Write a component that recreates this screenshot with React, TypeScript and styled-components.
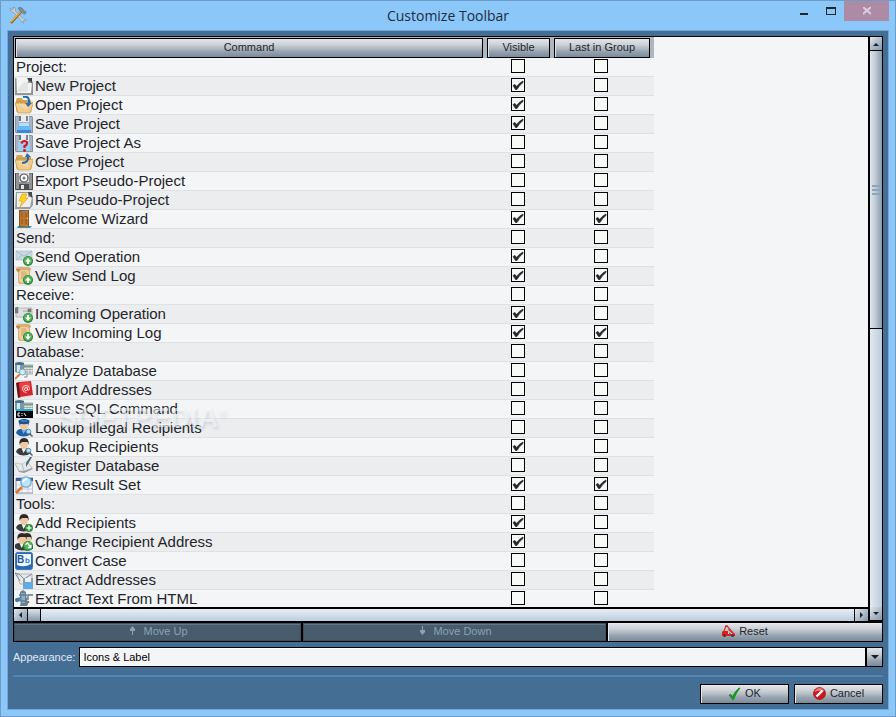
import React, { useState } from "react";
import styled, { createGlobalStyle, css } from "styled-components";

const GlobalStyle = createGlobalStyle`
  *, *::before, *::after { box-sizing: border-box; }
  html, body { margin: 0; height: 100%; }
  body { font-family: "Liberation Sans", Arial, sans-serif; font-size: 11px; color: #1f252b; }
  button, select, input { font: inherit; color: inherit; margin: 0; border-radius: 0; }
`;

const steel = css`
  background: linear-gradient(#e3e6ea 0%, #cfd4d9 28%, #b0b8c0 54%, #98a5b1 68%, #7a8b9b 100%);
`;

/* ---------- Window frame ---------- */

const Window = styled.main`
  display: flex;
  flex-direction: column;
  height: 100vh;
  padding: 0 6px 6px;
  background: #8cc7fa;
  border: 1px solid #6c9cc8;
`;

const TitleBar = styled.header`
  display: grid;
  grid-template-columns: 1fr auto 1fr;
  height: 29px;
  flex: none;
`;

const AppIcon = styled.span`
  padding: 5px 0 0 2px;
`;

const Title = styled.h1`
  margin: 0;
  font: 400 14px/29px "Open Sans", "Noto Sans", sans-serif;
  color: #1d2c3a;
`;

const WindowButtons = styled.div`
  display: flex;
  justify-content: flex-end;
  align-items: flex-start;
`;

const WindowButton = styled.button<{ $close?: boolean }>`
  display: grid;
  place-items: center;
  width: ${(p) => (p.$close ? 45 : 27)}px;
  height: 20px;
  padding: 0;
  border: 0;
  background: ${(p) => (p.$close ? "#ae8ba4" : "transparent")};
`;

const Client = styled.div`
  flex: 1;
  min-height: 0;
  display: flex;
  flex-direction: column;
  padding: 5px;
  background: #456e94;
  border: 1px solid #74a7d8;
`;

/* ---------- Scrolling list ---------- */

const Panel = styled.section`
  position: relative;
  flex: 1;
  min-height: 0;
  display: grid;
  grid-template: minmax(0, 1fr) 14px / minmax(0, 1fr) 14px;
  background: #000;
  border: 1px solid #000;
  border-bottom-width: 0;
`;

const ListView = styled.div`
  overflow: auto;
  scrollbar-width: none;
  background: #f3f5f7;
`;

const Table = styled.table`
  width: 640px;
  table-layout: fixed;
  border-collapse: collapse;
  font-size: 15px;
`;

const Col = styled.col<{ $w: number }>`
  width: ${(p) => p.$w}px;
`;

const HeadCell = styled.th`
  height: 21px;
  padding: 1px 3px 0 1px;
  font-weight: 400;
  background: #aeb6be;
  &:last-child { padding-right: 4px; }
`;

const HeadButton = styled.button`
  display: block;
  width: 100%;
  height: 20px;
  padding: 0 0 2px;
  font-size: 11px;
  border: 1px solid #000;
  box-shadow: inset 1px 1px #dfe4e9;
  ${steel}
`;

const Row = styled.tr`
  height: 19px;
  background: #f3f5f7;
  box-shadow: inset 0 -1px #dfe2e5;
  &:nth-child(even) { background: #ebedef; }
`;

const Cell = styled.td`
  height: 19px;
  padding: 0 0 0 1px;
`;

const CommandName = styled.div<{ $group?: boolean }>`
  display: flex;
  align-items: flex-start;
  gap: 2px;
  height: 19px;
  padding-left: ${(p) => (p.$group ? 1 : 0)}px;
  line-height: 17px;
  white-space: nowrap;
`;

const CheckCell = styled.td`
  height: 19px;
  padding: 1px 4px 0 1px;
  &:last-child { padding-right: 6px; }
`;

const CheckWrap = styled.label`
  display: grid;
  width: 14px;
  height: 18px;
  margin: 0 auto;
  > * { grid-area: 1 / 1; }
`;

const CheckBox = styled.input`
  appearance: none;
  width: 14px;
  height: 14px;
  background: #f7faf6;
  border: 1px solid #000;
  & + svg { visibility: hidden; pointer-events: none; }
  &:checked + svg { visibility: visible; }
`;

const Watermark = styled.div`
  position: absolute;
  left: 44px;
  top: 364px;
  font-size: 28px;
  font-weight: 700;
  line-height: 34px;
  color: rgba(250, 251, 252, 0.55);
  text-shadow: 1px 2px 3px rgba(90, 100, 115, 0.18);
  pointer-events: none;
  sup { font-size: 11px; line-height: 0; }
`;

const ScrollBar = styled.div<{ $vertical?: boolean }>`
  display: flex;
  flex-direction: ${(p) => (p.$vertical ? "column" : "row")};
  background: #000;
  padding: ${(p) => (p.$vertical ? "0 0 0 2px" : "2px 0 0 0")};
  gap: 1px;
`;

const ScrollArrow = styled.button`
  display: grid;
  place-items: center;
  flex: none;
  width: 13px;
  height: 12px;
  padding: 0;
  border: 0;
  background: linear-gradient(135deg, #e3e9ee, #b4c1cd 45%, #8598aa);
`;

const VerticalArrow = styled(ScrollArrow)`
  width: 12px;
  height: 13px;
`;

const VerticalThumb = styled.div`
  flex: 277 1 0;
  display: grid;
  grid-template-rows: repeat(3, 2px);
  align-content: center;
  justify-content: center;
  gap: 2px;
  background: linear-gradient(90deg, #dfe6ec, #c3ced8 40%, #899aaa);
`;

const Grip = styled.i`
  width: 8px;
  background: #8ea4ba;
`;

const VerticalTrack = styled.div`
  flex: 278 1 0;
  background: linear-gradient(90deg, #e2eaf3, #bccbdb);
`;

const HorizontalThumb = styled.div`
  flex: none;
  width: 12px;
  background: linear-gradient(#dce3ea, #b1bfcc 50%, #8598aa);
`;

const HorizontalTrack = styled.div`
  flex: 1;
  background: linear-gradient(#e6edf5, #bccddd);
`;

const Corner = styled.div`
  display: flex;
  flex-direction: column;
  padding-left: 2px;
  background: #000;
`;

/* ---------- Controls below the list ---------- */

const MoveBar = styled.div`
  display: grid;
  grid-template-columns: 289fr 305fr 276fr;
  flex: none;
`;

const PushButton = styled.button`
  display: flex;
  align-items: center;
  justify-content: center;
  gap: 4px;
  height: 20px;
  padding: 0 0 2px;
  border: 1px solid #000;
  box-shadow: inset 1px 1px #e6e9ed;
  white-space: nowrap;
  ${steel}
  &:disabled {
    color: #8ca1b3;
    background: #485c6e;
    box-shadow: inset 0 0 0 1px #3d4e5e, inset 1px 2px #62778a;
  }
`;

const MoveButton = styled(PushButton)`
  height: 21px;
  border-top: 2px solid #000;
  padding-bottom: 3px;
`;

const AppearanceRow = styled.div`
  display: flex;
  align-items: center;
  gap: 4px;
  flex: none;
  margin-top: 5px;
`;

const AppearanceLabel = styled.label`
  color: #e0e9f2;
`;

const Combo = styled.div`
  display: grid;
  grid-template-columns: minmax(0, 1fr) 17px;
  flex: 1;
  height: 20px;
`;

const Select = styled.select`
  appearance: none;
  grid-area: 1 / 1 / 2 / 3;
  width: 100%;
  padding: 0 20px 0 3px;
  color: #000;
  background: #f3f5f7;
  border: 1px solid #000;
  box-shadow: inset 1px 1px #fff;
`;

const ComboArrow = styled.span`
  grid-area: 1 / 2;
  display: grid;
  place-items: center;
  pointer-events: none;
  border: 1px solid #000;
  box-shadow: -1px 0 #000;
  ${steel}
`;

const Divider = styled.hr`
  flex: none;
  width: 100%;
  height: 3px;
  margin: 7px 0;
  border: 0;
  border-top: 1px solid #41678a;
  background: #5286b5;
`;

const Footer = styled.footer`
  display: flex;
  justify-content: flex-end;
  gap: 5px;
  flex: none;
`;

const DialogButton = styled(PushButton)`
  width: 89px;
`;

/* ---------- Icons ---------- */

const IconSvg = styled.svg`
  display: block;
  flex: none;
`;

const Disk = ({ tone = "blue" }: { tone?: string }) => (
  <>
    <path d="M0 1h17l1 1v16H1l-1-1z" fill={tone === "blue" ? "#8993a0" : "#77797b"} />
    <path d="M1 2h16v15H1z" fill={tone === "blue" ? "#a9b3bf" : "#929496"} />
    <path d="M4 1h10v6H4z" fill="#e9edf1" />
    <path d="M4 1h2v5H4z" fill="#6b747f" />
    <path d="M11 1h2v5h-2z" fill="#788390" />
  </>
);

const Folder = () => (
  <>
    <path d="M1 4l1-2h5l1 2h8v3H1z" fill="#d5a650" />
    <path d="M1 6h15v10H2z" fill="#e3b766" stroke="#b98a3a" strokeWidth=".7" />
    <path d="M0 7h13l5-1v2l-3 9H3z" fill="#f0cd8b" stroke="#c79a4b" strokeWidth=".7" />
    <path d="M1.500 8H14l-2 6z" fill="#f7dca6" opacity=".8" />
  </>
);

const Badge = ({ down, turn }: { down?: boolean; turn?: boolean }) => (
  <>
    <circle cx="13" cy="13" r="5" fill="#22842f" />
    <circle cx="13" cy="12.400" r="4" fill="#51b458" />
    {turn ? (
      <path d="M10.500 11.500l2-1.500 3.500 4.500M15.800 12V14.500H13" fill="none" stroke="#fff" strokeWidth="1.400" />
    ) : (
      <path
        d={down ? "M12 10h2v2.500h2l-3 3.500-3-3.500h2z" : "M12 16h2v-2.500h2L13 10l-3 3.500h2z"}
        fill="#fff"
      />
    )}
  </>
);

const Scroll = () => (
  <>
    <path d="M1 2q0-2 3-2h9q3 0 3 3l-1 1v9l-1 4H5q-2 0-2-3V4z" fill="#d9ae76" />
    <path d="M4 3h9l1 2-1 11H6L4 14z" fill="#f0cf9c" />
    <path d="M1 2h4v2L3 5Q1 4 1 2z" fill="#bd8849" />
    <path d="M6 5h5M6 7h6M6 9h5M6 11h4" stroke="#c69a61" strokeWidth=".8" />
  </>
);

const Person = ({ coat = "#3a3c40", hat = false, x = 0 }: { coat?: string; hat?: boolean; x?: number }) => (
  <g transform={`translate(${x} 0)`}>
    <path d="M1 14q1-4 5-4h5q4 1 5 5-3 2.500-7.500 2.500T1 14z" fill={coat} />
    <path d="M6.500 10l2 5 3-5z" fill={hat ? "#7db3e6" : "#f2f2f2"} />
    <ellipse cx="9" cy="6.500" rx="4" ry="4.500" fill="#f0c7a1" />
    <path d="M4.500 7q-1-7 4.500-7t4.500 7L12.500 4l-5 0-2 1z" fill={hat ? "#1d5b9e" : "#2f2825"} />
    {hat && <path d="M3.500 1.500Q9-1 14.500 1.500l-.5 3q-5 1.500-10 0z" fill="#185292" />}
    {hat && <path d="M6 2h6" stroke="#5f9bd3" />}
  </g>
);

const Lens = () => (
  <>
    <path d="M14.500 14.500l3 3" stroke="#5f5761" strokeWidth="1.500" />
    <circle cx="13.500" cy="12.500" r="2.300" fill="#b4e1f2" stroke="#5693ad" />
  </>
);

const Tables = () => (
  <>
    <path d="M9 3h9v9H9z" fill="#f3f5f4" stroke="#8a9a9b" strokeWidth=".8" />
    <path d="M9 4.500h9" stroke="#6f9388" strokeWidth="2" />
    <path d="M9 7.500h9M9 10h9M12 4v8M15 4v8" stroke="#93a3a5" strokeWidth=".8" />
    <path d="M0 1h9v9q-5 2-9 0z" fill="#7598aa" />
    <path d="M2 1h3v9H2z" fill="#d6e5ea" />
    <ellipse cx="4.500" cy="1.500" rx="4.500" ry="1.500" fill="#456f85" />
  </>
);

const Envelope = ({ grey }: { grey?: boolean }) => (
  <>
    <path d="M1 3h16v9H1z" fill={grey ? "#dedfe0" : "#cbd9e2"} stroke={grey ? "#a4a6a8" : "#a9bdc9"} strokeWidth=".7" />
    {grey ? (
      <path d="M0 3l3-1v6H0zM8 6h6M13 4h3v3h-3z" fill="#77797b" stroke="#77797b" strokeWidth=".6" />
    ) : (
      <path d="M1 3l8 5 8-5M1 12l6-5M17 12l-6-5" fill="none" stroke="#a2b8c5" strokeWidth=".8" />
    )}
  </>
);

const Art: Record<string, React.ReactNode> = {
  new: (
    <>
      <path d="M0 1h13l5 4v13H0z" fill="#8f9193" />
      <path d="M1 1h12v5h4l-1 10H2z" fill="#f4f4f4" />
      <path d="M2 15q3-9 11-11v11z" fill="#dcdddd" opacity=".7" />
      <path d="M12 1h5v7q0-4-3-4z" fill="#404244" />
      <path d="M1 1v16h16" fill="none" stroke="#9a9c9e" />
    </>
  ),
  open: (
    <>
      <Folder />
      <path d="M8 1q7-2 6 7" fill="none" stroke="#2865b0" strokeWidth="2" />
      <path d="M10 7h7l-4 4z" fill="#2b6cbf" />
    </>
  ),
  close: (
    <>
      <Folder />
      <path d="M7 10q7 0 6-7" fill="none" stroke="#2865b0" strokeWidth="2" />
      <path d="M10 4h6l-4-4z" fill="#2b6cbf" />
    </>
  ),
  save: (
    <>
      <Disk />
      <path d="M3 8h12v8H3z" fill="#67b8fa" />
      <path d="M4 8h10v3H4z" fill="#b7defd" />
      <path d="M2 15h14v3H2z" fill="#3f86d3" />
    </>
  ),
  saveAs: (
    <>
      <Disk />
      <path d="M3 8h12v9H3z" fill="#9ccdf3" />
      <path d="M6.500 9.500Q7 7 9.500 7t2.500 2.500q0 1.500-2.500 2.500v2" fill="none" stroke="#d21820" strokeWidth="2.200" />
      <circle cx="9.500" cy="16.500" r="1.400" fill="#d21820" />
    </>
  ),
  export: (
    <>
      <Disk tone="grey" />
      <path d="M4 1h10v9H4z" fill="#d9dadb" />
      <circle cx="9" cy="6" r="4" fill="#fff" stroke="#505254" strokeWidth="1.200" />
      <circle cx="9" cy="6" r="1.500" fill="#77797b" />
      <path d="M4 12h10v6H4z" fill="#4c4e50" />
      <path d="M6 13h3v4H6z" fill="#e5e6e7" />
      <path d="M.5 1v16.500h17V1" fill="none" stroke="#4c4e50" />
    </>
  ),
  run: (
    <>
      <path d="M1 1h13l4 4v9l-3 4H0z" fill="#9a9c9e" />
      <path d="M2 2h11v4h4l-2 10H2z" fill="#efefef" />
      <path d="M13 1h4v6l-3-3z" fill="#454749" />
      <path d="M7 3h5l-2 4h3l-8 9 2-6H4z" fill="#ffd028" stroke="#e5a812" strokeWidth=".7" />
    </>
  ),
  door: (
    <>
      <path d="M3 16h14l-2 2H2z" fill="#2798bd" />
      <path d="M4 0h10v17H4z" fill="#8e5420" />
      <path d="M5 2l8-2v17l-8-1z" fill="#bb752d" />
      <path d="M6 3h2v4H6zM10 3h2v4h-2zM6 9h2v5H6zM10 9h2v5h-2z" fill="#a96225" />
      <path d="M7 2q2-2 4 0" fill="none" stroke="#5690c7" />
      <circle cx="12.500" cy="8.500" r=".7" fill="#f4d76b" />
    </>
  ),
  send: (<><Envelope /><Badge /></>),
  incoming: (<><Envelope grey /><Badge down /></>),
  sendLog: (<><Scroll /><Badge /></>),
  incomingLog: (<><Scroll /><Badge down /></>),
  analyze: (
    <>
      <Tables />
      <path d="M5 12l-5 5" stroke="#df813b" strokeWidth="2" />
      <circle cx="7.500" cy="10" r="3" fill="#d4edf7" stroke="#76a6bd" />
      <path d="M9 15h3v-3" fill="none" stroke="#7f9098" />
    </>
  ),
  book: (
    <>
      <path d="M2 3l2 15 14-2-1-2z" fill="#e9e3e1" />
      <path d="M1 2l3-1 2 15-3 1z" fill="#67171b" />
      <path d="M4 1l12-1 2 14-13 2z" fill="#d6262b" />
      <path d="M5 2l10-1v5L6 10z" fill="#ef5757" opacity=".6" />
      <circle cx="11" cy="8" r="1.500" fill="none" stroke="#ffd9d5" />
      <path d="M12.500 6.500V9q2 1 2-1.500 0-3-3.500-3T7.500 8q0 3.500 4 3.500" fill="none" stroke="#ffd9d5" strokeWidth=".9" />
    </>
  ),
  sql: (
    <>
      <Tables />
      <path d="M1 10h17v8H1z" fill="#050607" />
      <path d="M1 9h17v2H1z" fill="#28a9cf" />
      <path d="M5 13H3v3h2M7 13v1M7 15v1M9 13l2 3" fill="none" stroke="#fff" />
    </>
  ),
  illegal: (<><Person coat="#1d5fa8" hat /><Lens /></>),
  lookup: (<><Person /><Lens /></>),
  register: (
    <>
      <path d="M0 7l7 1 5-3 6 7-9 4-5-1z" fill="#94999c" />
      <path d="M0 6l7 1 2 7-5 0zM7 7l5-3 5 7-8 3z" fill="#e6e8e8" stroke="#b2b6b8" strokeWidth=".6" />
      <path d="M17 0l-4 7-2 3 0-4 4-6z" fill="#486b84" />
    </>
  ),
  result: (
    <>
      <path d="M1 2h17v15H1z" fill="#f5f6fa" stroke="#888ca8" />
      <path d="M1 2h17v3H1z" fill="#4558a0" />
      <path d="M7 4v12M13 4v12M2 9h15M2 13h15" stroke="#c8cada" />
      <path d="M7 11l-6 6" stroke="#d9782e" strokeWidth="2.500" />
      <circle cx="11" cy="6" r="5.200" fill="#bce5fb" stroke="#72aacd" strokeWidth="1.300" />
      <path d="M8 6q1-3 4-3" fill="none" stroke="#fff" strokeWidth="1.500" />
    </>
  ),
  add: (
    <>
      <Person />
      <circle cx="14" cy="14" r="4" fill="#2c9438" />
      <path d="M14 11.500v5M11.500 14h5" stroke="#dff3e0" strokeWidth="1.600" />
    </>
  ),
  change: (<><Person x={3} coat="#5a3325" /><Person x={-2} /><Badge turn /></>),
  convert: (
    <>
      <rect x=".5" y=".5" width="17" height="17" rx="2" fill="#2d69b2" stroke="#4178b6" />
      <path d="M2 2h14v10q-7 4-14 1z" fill="#eef5fc" />
      <text x="2" y="11" fontFamily="Liberation Sans" fontSize="10" fontWeight="700" fill="#1a569f">B</text>
      <text x="10" y="11" fontFamily="Liberation Sans" fontSize="8" fontWeight="700" fill="#397bc4">b</text>
    </>
  ),
  extract: (
    <>
      <path d="M2 3h15v10H5z" fill="#e6e8e8" stroke="#a6abad" strokeWidth=".8" />
      <path d="M0 2l4 1 5 5 8-5M0 2l5 8" fill="none" stroke="#858a8d" />
      <path d="M8 7h10v11H8z" fill="#8a9eb3" />
      <path d="M10 7h6v4h-6z" fill="#edf1f4" />
      <path d="M9 12h8v5H9z" fill="#55adf2" />
    </>
  ),
  html: (
    <>
      <path d="M5 2l3-2 3 2v3l1 5 1 4-1 2H5l1-5-4 1-2-3 5-2z" fill="#62859f" />
      <path d="M6 3h4v10H7z" fill="#91afc3" />
      <path d="M11 9h2V5h5M4 5h8M5 11h6" fill="none" stroke="#5d7b92" strokeWidth="1.400" />
      <circle cx="2" cy="10" r="2" fill="#3c76aa" />
      <circle cx="13" cy="12" r="1.300" fill="#b55a4d" />
    </>
  ),
};

const CommandIcon = ({ name }: { name: string }) => (
  <IconSvg width="18" height="18" viewBox="0 0 18 18" aria-hidden="true">{Art[name]}</IconSvg>
);

const ToolsIcon = () => (
  <IconSvg width="18" height="19" viewBox="0 0 18 19" aria-hidden="true">
    <path d="M1 2l2 2 1.500-1L4 1q2 0 2.500 2v2l7 7q3-.5 3.500 3l-2-1-1.500 1.500L15 17q-3 0-3.500-3L4.500 6.500Q1.500 6.500 1 2z" fill="#c3ced7" stroke="#8195a6" strokeWidth=".7" />
    <path d="M12 6L2 17" stroke="#8f5f18" strokeWidth="2.400" />
    <path d="M11.500 6L2 16" stroke="#efb437" strokeWidth="1.200" />
    <path d="M9 2q3-2 5 1l1 2 1.500 0L17 7l-2 1.500L13 6.500 11 5z" fill="#7f8b94" stroke="#606d78" strokeWidth=".5" />
  </IconSvg>
);

const Tick = () => (
  <IconSvg width="14" height="14" viewBox="0 0 14 14" aria-hidden="true">
    <path d="M2 7.500l2-1 1.500 2Q8 5 12 3v1.500Q8.500 7 6 11.500H4.500z" fill="#22272c" stroke="#22272c" strokeWidth=".7" />
  </IconSvg>
);

const arrowPaths = { up: "M3 2L6 5H0z", down: "M0 1h6L3 4z", left: "M4 0v6L1 3z", right: "M1 0v6l3-3z" };

const Arrow = ({ dir }: { dir: keyof typeof arrowPaths }) => (
  <IconSvg width="6" height="6" viewBox="0 0 6 6" aria-hidden="true">
    <path d={arrowPaths[dir]} fill="#17222d" />
  </IconSvg>
);

const MoveArrow = ({ down }: { down?: boolean }) => (
  <IconSvg width="12" height="10" viewBox="0 0 12 10" aria-hidden="true">
    <path d={down ? "M5 0h1v4h2v2L5.500 9 3 6V4h2z" : "M5 9h1V5h2V3L5.500 0 3 3v2h2z"} fill="currentColor" />
  </IconSvg>
);

const ResetIcon = () => (
  <IconSvg width="13" height="12" viewBox="0 0 13 12" aria-hidden="true">
    <path d="M1 6h5V4l7 5v2H0V7z" fill="#dc2017" />
    <path d="M6 5l5 4H6z" fill="#c9ccda" />
    <path d="M2 6l2-5 2 1 6 7" fill="none" stroke="#d1332b" strokeWidth="1.200" />
    <path d="M3 1h3" stroke="#9f302d" />
    <path d="M7 7l2 2H7z" fill="#5264cf" />
    <circle cx="2.500" cy="10.500" r="1.500" fill="#662a28" />
    <circle cx="10.500" cy="10.500" r="1.500" fill="#662a28" />
  </IconSvg>
);

const OkIcon = () => (
  <IconSvg width="13" height="13" viewBox="0 0 13 13" aria-hidden="true">
    <path d="M1 8l2-.5L4.500 10Q7 4 11 1h1Q8 6 5.500 12.500h-1z" fill="#13a51c" stroke="#087512" strokeWidth=".6" />
  </IconSvg>
);

const CancelIcon = () => (
  <IconSvg width="13" height="13" viewBox="0 0 13 13" aria-hidden="true">
    <circle cx="6.500" cy="6.500" r="6" fill="#cc171b" stroke="#a51318" strokeWidth=".7" />
    <path d="M1.500 5Q3 1 6.500 1T11 4Q6 3 1.500 5z" fill="#ef7d79" />
    <path d="M3.500 9.500l6-6" stroke="#fff" strokeWidth="2.400" />
  </IconSvg>
);

/* ---------- Data ---------- */

type Command = { label: string; icon?: string; visible?: boolean; last?: boolean };

const commands: Command[] = [
  { label: "Project:" },
  { label: "New Project", icon: "new", visible: true },
  { label: "Open Project", icon: "open", visible: true },
  { label: "Save Project", icon: "save", visible: true },
  { label: "Save Project As", icon: "saveAs" },
  { label: "Close Project", icon: "close" },
  { label: "Export Pseudo-Project", icon: "export" },
  { label: "Run Pseudo-Project", icon: "run" },
  { label: "Welcome Wizard", icon: "door", visible: true, last: true },
  { label: "Send:" },
  { label: "Send Operation", icon: "send", visible: true },
  { label: "View Send Log", icon: "sendLog", visible: true, last: true },
  { label: "Receive:" },
  { label: "Incoming Operation", icon: "incoming", visible: true },
  { label: "View Incoming Log", icon: "incomingLog", visible: true, last: true },
  { label: "Database:" },
  { label: "Analyze Database", icon: "analyze" },
  { label: "Import Addresses", icon: "book" },
  { label: "Issue SQL Command", icon: "sql" },
  { label: "Lookup Illegal Recipients", icon: "illegal" },
  { label: "Lookup Recipients", icon: "lookup", visible: true },
  { label: "Register Database", icon: "register" },
  { label: "View Result Set", icon: "result", visible: true, last: true },
  { label: "Tools:" },
  { label: "Add Recipients", icon: "add", visible: true },
  { label: "Change Recipient Address", icon: "change", visible: true },
  { label: "Convert Case", icon: "convert" },
  { label: "Extract Addresses", icon: "extract" },
  { label: "Extract Text From HTML", icon: "html" },
];

const Check = ({ label, initial }: { label: string; initial?: boolean }) => {
  const [checked, setChecked] = useState(!!initial);
  return (
    <CheckWrap>
      <CheckBox type="checkbox" aria-label={label} checked={checked} onChange={() => setChecked(!checked)} />
      <Tick />
    </CheckWrap>
  );
};

export default function App() {
  return (
    <>
      <GlobalStyle />
      <Window>
        <TitleBar>
          <AppIcon><ToolsIcon /></AppIcon>
          <Title>Customize Toolbar</Title>
          <WindowButtons>
            <WindowButton aria-label="Minimize">
              <IconSvg width="10" height="10"><path d="M1 7h8v2H1z" fill="#20262c" /></IconSvg>
            </WindowButton>
            <WindowButton aria-label="Maximize">
              <IconSvg width="10" height="8"><path d="M0 0h10v8H0zM1 2v5h8V2z" fill="#20262c" fillRule="evenodd" /></IconSvg>
            </WindowButton>
            <WindowButton $close aria-label="Close">
              <IconSvg width="8" height="8"><path d="M0 0l8 7M8 0L0 7" stroke="#ddd0dc" strokeWidth="2" /></IconSvg>
            </WindowButton>
          </WindowButtons>
        </TitleBar>
        <Client>
          <Panel>
            <ListView>
              <Table>
                <colgroup><Col $w={472} /><Col $w={67} /><Col $w={101} /></colgroup>
                <thead>
                  <tr>
                    <HeadCell><HeadButton>Command</HeadButton></HeadCell>
                    <HeadCell><HeadButton>Visible</HeadButton></HeadCell>
                    <HeadCell><HeadButton>Last in Group</HeadButton></HeadCell>
                  </tr>
                </thead>
                <tbody>
                  {commands.map((c) => (
                    <Row key={c.label}>
                      <Cell>
                        <CommandName $group={!c.icon}>
                          {c.icon && <CommandIcon name={c.icon} />}
                          {c.label}
                        </CommandName>
                      </Cell>
                      <CheckCell><Check label={`${c.label} visible`} initial={c.visible} /></CheckCell>
                      <CheckCell><Check label={`${c.label} last in group`} initial={c.last} /></CheckCell>
                    </Row>
                  ))}
                </tbody>
              </Table>
            </ListView>
            <ScrollBar $vertical>
              <VerticalArrow aria-label="Scroll up"><Arrow dir="up" /></VerticalArrow>
              <VerticalThumb><Grip /><Grip /><Grip /></VerticalThumb>
              <VerticalTrack />
            </ScrollBar>
            <ScrollBar>
              <ScrollArrow aria-label="Scroll left"><Arrow dir="left" /></ScrollArrow>
              <HorizontalThumb />
              <HorizontalTrack />
              <ScrollArrow aria-label="Scroll right"><Arrow dir="right" /></ScrollArrow>
            </ScrollBar>
            <Corner>
              <VerticalArrow aria-label="Scroll down"><Arrow dir="down" /></VerticalArrow>
            </Corner>
            <Watermark>SOFTPEDIA<sup>®</sup></Watermark>
          </Panel>
          <MoveBar>
            <MoveButton disabled><MoveArrow />Move Up</MoveButton>
            <MoveButton disabled><MoveArrow down />Move Down</MoveButton>
            <MoveButton><ResetIcon />Reset</MoveButton>
          </MoveBar>
          <AppearanceRow>
            <AppearanceLabel htmlFor="appearance">Appearance:</AppearanceLabel>
            <Combo>
              <Select id="appearance" defaultValue="Icons & Label">
                <option>Icons &amp; Label</option>
                <option>Icons</option>
                <option>Label</option>
              </Select>
              <ComboArrow>
                <IconSvg width="8" height="5"><path d="M0 0h8L4 4z" fill="#17222d" /></IconSvg>
              </ComboArrow>
            </Combo>
          </AppearanceRow>
          <Divider />
          <Footer>
            <DialogButton><OkIcon />OK</DialogButton>
            <DialogButton><CancelIcon />Cancel</DialogButton>
          </Footer>
        </Client>
      </Window>
    </>
  );
}
